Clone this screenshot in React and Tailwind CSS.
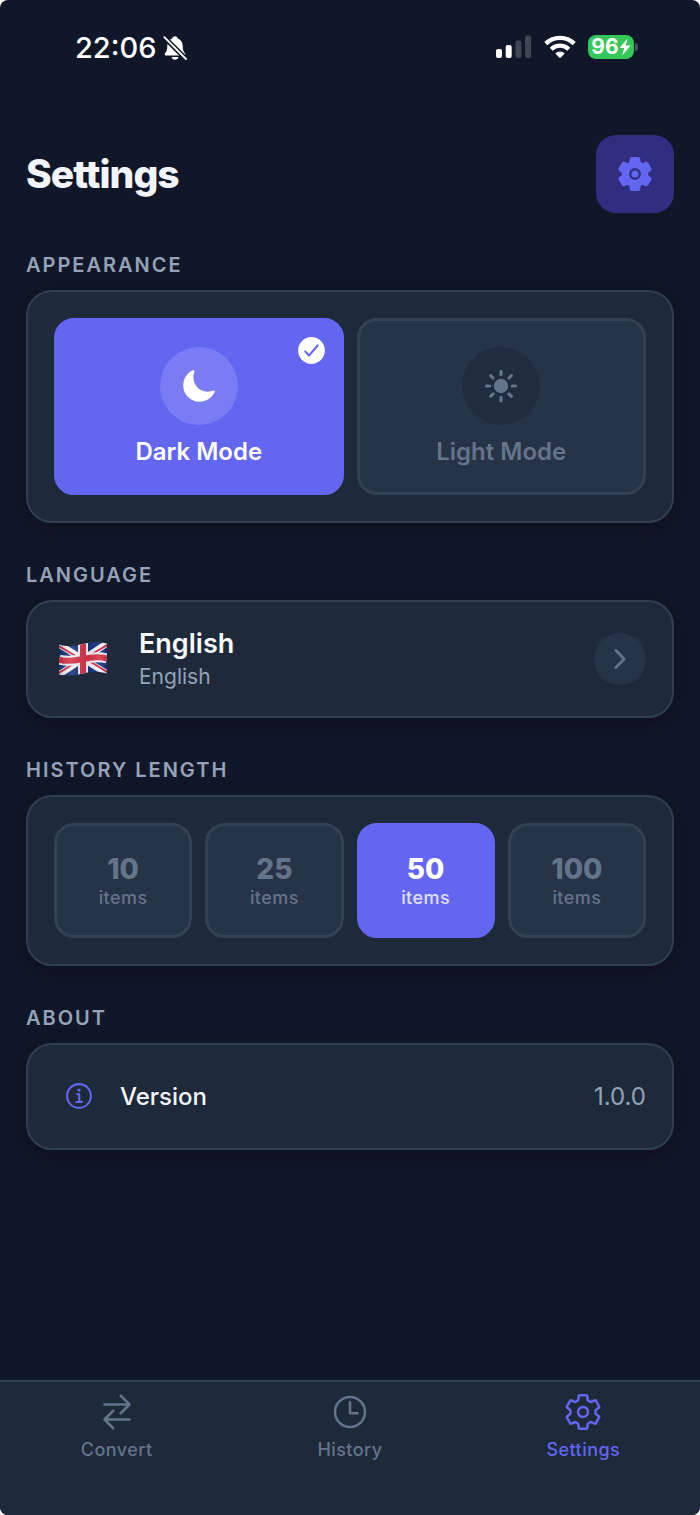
import React, { useState } from 'react';
import {
  IoCheckmarkCircle,
  IoChevronForward,
  IoInformationCircleOutline,
  IoMoon,
  IoSettings,
  IoSettingsOutline,
  IoSunny,
  IoSwapHorizontalOutline,
  IoTimeOutline
} from 'react-icons/io5';

const themes = [
  { id: 'dark', label: 'Dark Mode', Icon: IoMoon },
  { id: 'light', label: 'Light Mode', Icon: IoSunny }
];

const historyLengths = [10, 25, 50, 100];

const tabs = [
  { id: 'convert', label: 'Convert', Icon: IoSwapHorizontalOutline },
  { id: 'history', label: 'History', Icon: IoTimeOutline },
  { id: 'settings', label: 'Settings', Icon: IoSettingsOutline }
];

const BellOffIcon = () => (
  <svg width="24" height="26" viewBox="0 0 24 26" fill="none" aria-hidden="true">
    <path
      d="M12 1.200c1.500 0 2.700 1 2.900 2.300 3.100 1.200 4.800 4 4.800 7.500 0 3.600.6 5.300 2.200 7.200.9 1 .5 2.300-1 2.300H3.100c-1.500 0-1.900-1.300-1-2.300C3.700 16.300 4.300 14.600 4.300 11c0-3.500 1.700-6.300 4.800-7.500.2-1.300 1.400-2.300 2.900-2.300z"
      fill="white"
    />
    <path d="M8.600 22h6.800c-.3 1.700-1.700 2.800-3.400 2.800S8.900 23.700 8.600 22z" fill="white" />
    <path d="M0.500 1.500 23 24" stroke="#101728" strokeWidth="4.800" />
    <path d="M1.300 2.200 23 24" stroke="white" strokeWidth="1.800" strokeLinecap="round" />
  </svg>
);

const SignalIcon = () => (
  <svg width="36" height="24" viewBox="0 0 36 24" fill="white" aria-hidden="true">
    <rect x="0" y="14" width="6" height="9" rx="2" />
    <rect x="9.700" y="10" width="6" height="13" rx="2" />
    <rect x="19.400" y="5.500" width="6" height="17.500" rx="2" opacity="0.2" />
    <rect x="29.100" y="0.500" width="6" height="22.500" rx="2" opacity="0.2" />
  </svg>
);

const WifiIcon = () => (
  <svg width="32" height="24" viewBox="0 0 32 24" fill="none" stroke="white" aria-hidden="true">
    <path d="M1.800 8.600a20.400 20.400 0 0 1 28.400 0" strokeWidth="4.400" />
    <path d="M7.200 14.200a12.700 12.700 0 0 1 17.600 0" strokeWidth="4.200" />
    <path d="M16 23.300 11.300 18.500a6.800 6.800 0 0 1 9.400 0z" fill="white" stroke="none" />
  </svg>
);

const BatteryIcon = () => (
  <div className="flex items-center gap-px">
    <div className="flex h-6 w-[46px] items-center justify-center rounded-lg bg-[#34c759]">
      <span className="text-[21px] leading-6 font-bold text-white">96</span>
      <svg width="12" height="18" viewBox="0 0 12 18" fill="white" aria-hidden="true">
        <path d="M8.500 0.500 0.500 10h4.700L3.300 17.500 11.600 7.500H6.800z" />
      </svg>
    </div>
    <div className="h-2 w-[3px] rounded-r-full bg-[#4b5261]" />
  </div>
);

const UkFlag = () => (
  <svg width="48" height="34" viewBox="0 0 48 34" role="img" aria-label="United Kingdom">
    <defs>
      <clipPath id="flag">
        <path d="M0 2.500C8 5 15 4 24 2S40-.5 48 1.500V31.500C40 29 32 29.500 24 31.500S8 34.500 0 32.500z" />
      </clipPath>
      <linearGradient id="wave" x1="0" x2="1" y1="0" y2="0">
        <stop offset="0" stopColor="black" stopOpacity="0.15" />
        <stop offset="0.25" stopColor="white" stopOpacity="0.12" />
        <stop offset="0.6" stopColor="black" stopOpacity="0.08" />
        <stop offset="0.85" stopColor="white" stopOpacity="0.08" />
        <stop offset="1" stopColor="black" stopOpacity="0.15" />
      </linearGradient>
    </defs>
    <g clipPath="url(#flag)" fill="none">
      <rect width="48" height="34" fill="#14337f" />
      <path d="M0 2.500 24 17 48 31.500M0 32.500 24 17 48 1.500" stroke="#f1f3f8" strokeWidth="6.500" />
      <path d="M-1 3.500 20 16M49 30.500 28 17.500M-1 31.500 19 19M49 2.500 28 15" stroke="#d32541" strokeWidth="2" />
      <path d="M0 17.500C8 20 15 19 24 17S40 14.500 48 16.500" stroke="#f1f3f8" strokeWidth="10" />
      <path d="M24 0V34" stroke="#f1f3f8" strokeWidth="10" />
      <path d="M0 17.500C8 20 15 19 24 17S40 14.500 48 16.500" stroke="#d93349" strokeWidth="6" />
      <path d="M24 0V34" stroke="#d93349" strokeWidth="6" />
      <rect width="48" height="34" fill="url(#wave)" />
    </g>
  </svg>
);

const StatusBar = () => (
  <div className="flex h-[135px] items-start justify-between pt-8 pr-[62px] pl-[75px]">
    <div className="flex h-8 items-center gap-1.5">
      <span className="text-[29px] leading-8 font-medium text-white">22:06</span>
      <BellOffIcon />
    </div>
    <div className="flex h-[30px] items-center gap-3">
      <SignalIcon />
      <WifiIcon />
      <BatteryIcon />
    </div>
  </div>
);

const Section = ({ title, children }) => (
  <section>
    <h2 className="mb-3 text-xl leading-[26px] font-semibold tracking-widest text-[#94a3b8] uppercase">{title}</h2>
    <div className="rounded-[26px] border-2 border-[#304050] bg-[#1e293a] p-[26px] shadow-[0_4px_20px_rgba(0,0,0,0.3)]">
      {children}
    </div>
  </section>
);

const ThemeOption = ({ label, Icon, selected, onSelect }) => (
  <button
    type="button"
    aria-pressed={selected}
    onClick={onSelect}
    className={`relative flex flex-col items-center gap-[13px] rounded-[20px] border-3 py-[26px] ${
      selected ? 'border-[#6366f1] bg-[#6366f1] text-white' : 'border-[#334152] bg-[#273346] text-[#64748b]'
    }`}
  >
    <span
      className={`flex size-[78px] items-center justify-center rounded-full ${
        selected ? 'bg-white/15' : 'bg-[#212d3f]'
      }`}
    >
      <Icon size={36} />
    </span>
    <span className="text-2xl leading-7 font-semibold">{label}</span>
    {selected && <IoCheckmarkCircle size={33} className="absolute top-[13px] right-[13px]" />}
  </button>
);

const HistoryOption = ({ count, selected, onSelect }) => (
  <button
    type="button"
    aria-pressed={selected}
    onClick={onSelect}
    className={`flex flex-col items-center gap-px rounded-[20px] border-3 py-[26px] ${
      selected ? 'border-[#6366f1] bg-[#6366f1] text-white' : 'border-[#334152] bg-[#273346] text-[#64748b]'
    }`}
  >
    <span className="text-[28px] leading-[34px] font-extrabold">{count}</span>
    <span className={`text-lg leading-[22px] font-medium tracking-wide ${selected ? 'text-white/80' : ''}`}>
      items
    </span>
  </button>
);

const TabBar = ({ active, onChange }) => (
  <nav className="grid h-[135px] grid-cols-3 items-start border-t-2 border-[#304050] bg-[#1e293a] pt-2.5">
    {tabs.map(({ id, label, Icon }) => (
      <a
        key={id}
        href={`#${id}`}
        onClick={() => onChange(id)}
        className={`flex flex-col items-center gap-[7px] ${active === id ? 'text-[#6366f1]' : 'text-[#64748b]'}`}
      >
        <Icon size={40} />
        <span className="text-lg leading-[22px] font-medium tracking-wide">{label}</span>
      </a>
    ))}
  </nav>
);

const App = () => {
  const [theme, setTheme] = useState('dark');
  const [historyLength, setHistoryLength] = useState(50);
  const [tab, setTab] = useState('settings');

  return (
    <div className="bg-white">
      <div className="flex min-h-screen flex-col overflow-hidden rounded-lg bg-[#101728] font-['Inter',sans-serif]">
        <StatusBar />

        <main className="flex grow flex-col gap-[39px] px-[26px] pb-10">
          <header className="flex items-center justify-between">
            <h1 className="text-[39px] leading-[48px] font-extrabold tracking-tight text-[#f1f5f9]">Settings</h1>
            <div className="flex size-[78px] items-center justify-center rounded-[20px] bg-[#312e81] text-[#6366f1]">
              <IoSettings size={38} />
            </div>
          </header>

          <Section title="Appearance">
            <div className="grid grid-cols-2 gap-[13px]">
              {themes.map(({ id, label, Icon }) => (
                <ThemeOption
                  key={id}
                  label={label}
                  Icon={Icon}
                  selected={theme === id}
                  onSelect={() => setTheme(id)}
                />
              ))}
            </div>
          </Section>

          <Section title="Language">
            <button type="button" className="flex w-full items-center text-left">
              <span className="flex w-[85px] pl-[5px]">
                <UkFlag />
              </span>
              <span className="flex grow flex-col gap-1">
                <span className="text-[27px] leading-8 font-semibold text-[#f8fafc]">English</span>
                <span className="text-[21px] leading-[26px] text-[#94a3b8]">English</span>
              </span>
              <span className="flex size-[52px] items-center justify-center rounded-full bg-[#273346] text-[#64748b]">
                <IoChevronForward size={30} />
              </span>
            </button>
          </Section>

          <Section title="History Length">
            <div className="grid grid-cols-4 gap-[13px]">
              {historyLengths.map((count) => (
                <HistoryOption
                  key={count}
                  count={count}
                  selected={historyLength === count}
                  onSelect={() => setHistoryLength(count)}
                />
              ))}
            </div>
          </Section>

          <Section title="About">
            <div className="flex h-[51px] items-center text-2xl">
              <span className="flex w-[66px] pl-[9px] text-[#6366f1]">
                <IoInformationCircleOutline size={33} />
              </span>
              <span className="grow font-medium text-[#f1f5f9]">Version</span>
              <span className="text-[#94a3b8]">1.0.0</span>
            </div>
          </Section>
        </main>

        <TabBar active={tab} onChange={setTab} />
      </div>
    </div>
  );
};

export default App;
